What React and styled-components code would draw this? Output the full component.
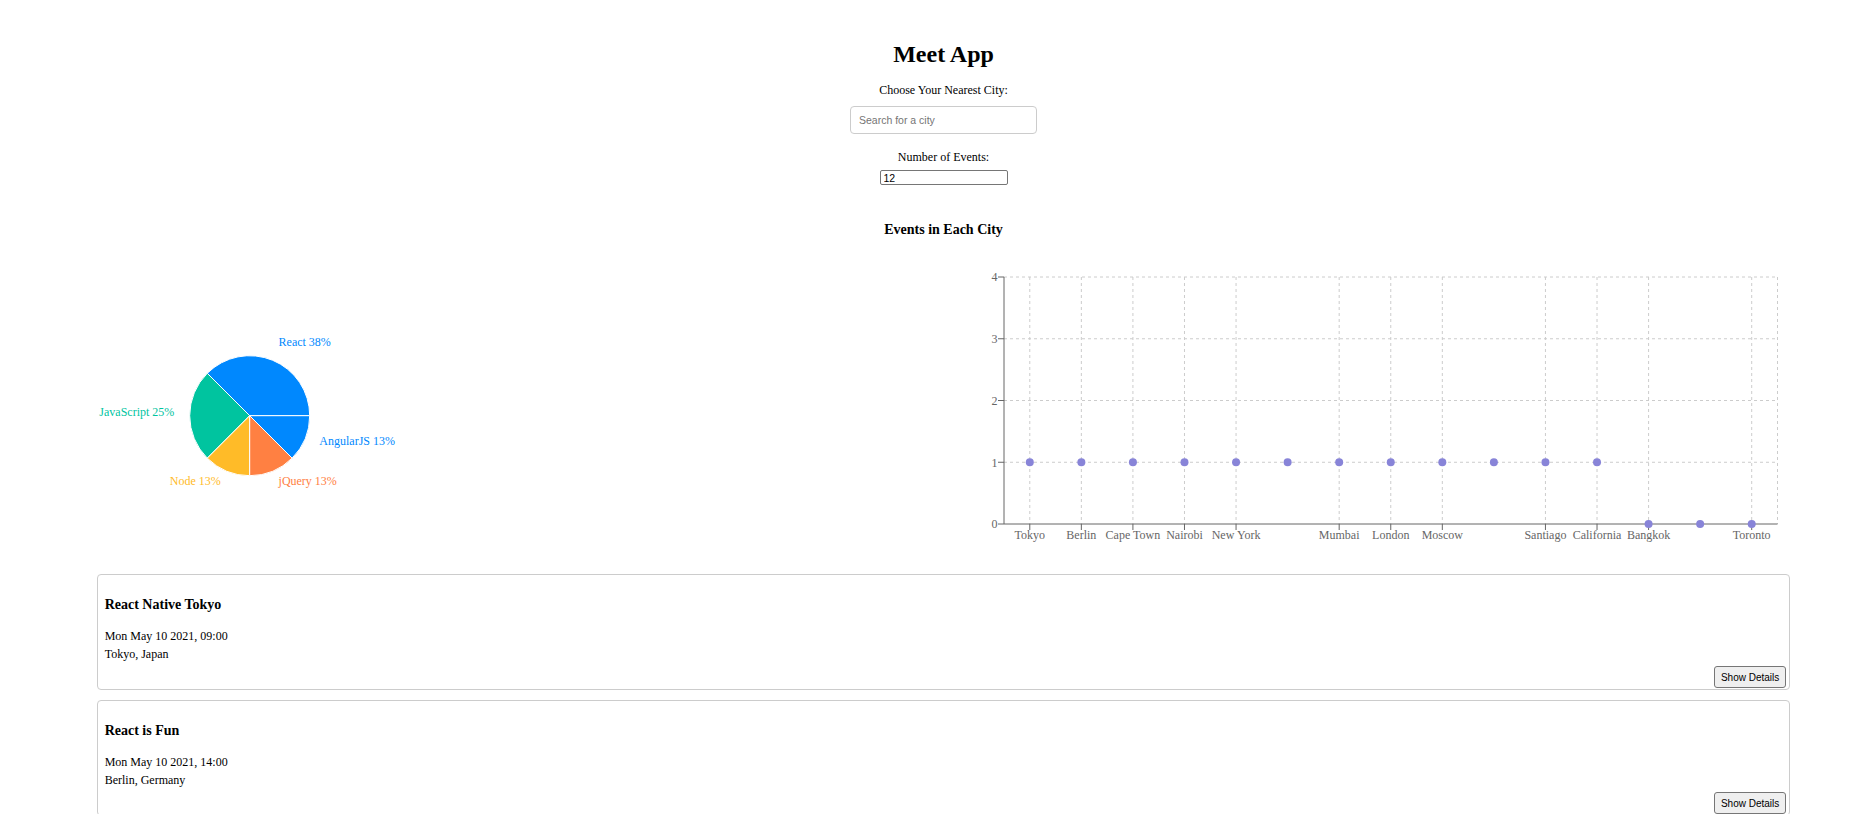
import React from 'react';
import styled, { createGlobalStyle } from 'styled-components';

const GlobalStyle = createGlobalStyle`
  html, body { margin: 0; padding: 0; background: #fff; }
  body {
    font-family: "Liberation Serif", "Times New Roman", serif;
    font-size: 12px;
    color: #000;
  }
  * { box-sizing: border-box; }
`;

const Page = styled.div`
  padding: 41px 0 40px 17px;
`;

const Header = styled.header`
  display: flex;
  flex-direction: column;
  align-items: center;
`;

const Title = styled.h1`
  margin: 0;
  font-size: 24px;
  font-weight: bold;
  line-height: normal;
`;

const Field = styled.div`
  display: flex;
  flex-direction: column;
  align-items: center;
  margin-top: ${(p) => p.$gap}px;
`;

const FieldLabel = styled.label`
  display: block;
  line-height: normal;
`;

const SearchInput = styled.input`
  width: 187px;
  height: 27.6px;
  margin-top: 8px;
  padding: 0 8px;
  border: 1px solid #ccc;
  border-radius: 4px;
  font-family: "Liberation Sans", Arial, sans-serif;
  font-size: 10.5px;
  color: #000;
  outline: none;
  &::placeholder { color: #757575; }
`;

const NumberInput = styled.input`
  width: 128px;
  height: 15px;
  margin-top: 5.5px;
  padding: 0 3px;
  border: 1px solid #767676;
  border-radius: 2px;
  font-family: "Liberation Sans", Arial, sans-serif;
  font-size: 10.5px;
  color: #000;
  outline: none;
  -moz-appearance: textfield;
  &::-webkit-outer-spin-button,
  &::-webkit-inner-spin-button { -webkit-appearance: none; margin: 0; }
`;

const ChartsTitle = styled.h3`
  margin: 37.2px 0 0;
  font-size: 14px;
  font-weight: bold;
  line-height: normal;
  text-align: center;
`;

const ChartsRow = styled.section`
  display: flex;
  margin-top: 18.45px;
  height: 300px;
`;

const ChartPane = styled.div`
  flex: 1 1 0;
  min-width: 0;
`;

const ChartSvg = styled.svg`
  display: block;
  width: 100%;
  height: 300px;
  font-family: "Liberation Serif", "Times New Roman", serif;
  font-size: 12px;
`;

const EventList = styled.ul`
  list-style: none;
  margin: 17.6px 0 0;
  padding: 0;
  display: flex;
  flex-direction: column;
  gap: 10px;
`;

const EventCard = styled.li`
  width: 91.4%;
  margin: 0 auto;
  padding: 7.5px 3px 1px 7px;
  border: 1px solid #ccc;
  border-radius: 4px;
`;

const EventTitle = styled.h3`
  margin: 14px 0;
  font-size: 14px;
  font-weight: bold;
  line-height: normal;
`;

const EventInfo = styled.p`
  margin: 0;
  line-height: 18px;
`;

const CardFooter = styled.div`
  display: flex;
  justify-content: flex-end;
  margin-top: 3.5px;
`;

const DetailsButton = styled.button`
  height: 22px;
  padding: 0 6px;
  background: #efefef;
  border: 1px solid #767676;
  border-radius: 3px;
  font-family: "Liberation Sans", Arial, sans-serif;
  font-size: 10px;
  color: #000;
`;

const PIE = { cx: 232.7, cy: 158.7, r: 60, labelR: 75.4 };
const genres = [
  { name: 'React', value: 3, color: '#0088FE' },
  { name: 'JavaScript', value: 2, color: '#00C49F' },
  { name: 'Node', value: 1, color: '#FFBB28' },
  { name: 'jQuery', value: 1, color: '#FF8042' },
  { name: 'AngularJS', value: 1, color: '#0088FE' },
];

const polar = (r, deg) => {
  const a = (deg * Math.PI) / 180;
  return [PIE.cx + r * Math.cos(a), PIE.cy - r * Math.sin(a)];
};

function GenrePie() {
  const total = genres.reduce((s, g) => s + g.value, 0);
  let start = 0;
  const slices = genres.map((g) => {
    const sweep = (g.value / total) * 360;
    const end = start + sweep;
    const [x0, y0] = polar(PIE.r, start);
    const [x1, y1] = polar(PIE.r, end);
    const mid = start + sweep / 2;
    const [lx, ly] = polar(PIE.labelR, mid);
    const d = `M${PIE.cx},${PIE.cy} L${x0},${y0} A${PIE.r},${PIE.r} 0 ${sweep > 180 ? 1 : 0} 0 ${x1},${y1} Z`;
    start = end;
    return { ...g, d, lx, ly, pct: Math.round((g.value / total) * 100) };
  });
  return (
    <ChartSvg>
      {slices.map((s) => (
        <path key={s.name} d={s.d} fill={s.color} stroke="#fff" strokeWidth="1" />
      ))}
      {slices.map((s) => (
        <text
          key={s.name + 'l'}
          x={s.lx}
          y={s.ly}
          fill={s.color}
          textAnchor={s.lx > PIE.cx ? 'start' : 'end'}
        >
          {`${s.name} ${s.pct}%`}
        </text>
      ))}
    </ChartSvg>
  );
}

const cities = [
  { city: 'Tokyo', count: 1, tick: true },
  { city: 'Berlin', count: 1, tick: true },
  { city: 'Cape Town', count: 1, tick: true },
  { city: 'Nairobi', count: 1, tick: true },
  { city: 'New York', count: 1, tick: true },
  { city: 'Dubai', count: 1, tick: false },
  { city: 'Mumbai', count: 1, tick: true },
  { city: 'London', count: 1, tick: true },
  { city: 'Moscow', count: 1, tick: true },
  { city: 'Paris', count: 1, tick: false },
  { city: 'Santiago', count: 1, tick: true },
  { city: 'California', count: 1, tick: true },
  { city: 'Bangkok', count: 0, tick: true },
  { city: 'Sydney', count: 0, tick: false },
  { city: 'Toronto', count: 0, tick: true },
];

const PLOT = { left: 60, right: 833.5, top: 20, bottom: 267, max: 4 };

function CityScatter() {
  const band = (PLOT.right - PLOT.left) / cities.length;
  const xOf = (i) => PLOT.left + band * (i + 0.5);
  const yOf = (v) => PLOT.bottom - ((PLOT.bottom - PLOT.top) * v) / PLOT.max;
  const yTicks = [0, 1, 2, 3, 4];
  const grid = { stroke: '#ccc', strokeDasharray: '3 3', fill: 'none' };
  return (
    <ChartSvg>
      {yTicks.slice(1).map((v) => (
        <line key={'h' + v} x1={PLOT.left} x2={PLOT.right} y1={yOf(v)} y2={yOf(v)} {...grid} />
      ))}
      {cities.map((c, i) =>
        c.tick ? (
          <line key={'v' + i} x1={xOf(i)} x2={xOf(i)} y1={PLOT.top} y2={PLOT.bottom} {...grid} />
        ) : null
      )}
      <line x1={PLOT.right} x2={PLOT.right} y1={PLOT.top} y2={PLOT.bottom} {...grid} />

      <line x1={PLOT.left} x2={PLOT.left} y1={PLOT.top} y2={PLOT.bottom} stroke="#666" />
      <line x1={PLOT.left} x2={PLOT.right} y1={PLOT.bottom} y2={PLOT.bottom} stroke="#666" />

      {yTicks.map((v) => (
        <g key={'yt' + v}>
          <line x1={PLOT.left - 6} x2={PLOT.left} y1={yOf(v)} y2={yOf(v)} stroke="#666" />
          <text x={PLOT.left - 6.5} y={yOf(v)} dy="0.355em" textAnchor="end" fill="#666">
            {v}
          </text>
        </g>
      ))}
      {cities.map((c, i) =>
        c.tick ? (
          <g key={'xt' + i}>
            <line x1={xOf(i)} x2={xOf(i)} y1={PLOT.bottom} y2={PLOT.bottom + 6} stroke="#666" />
            <text x={xOf(i)} y={PLOT.bottom + 6} dy="0.71em" textAnchor="middle" fill="#666">
              {c.city}
            </text>
          </g>
        ) : null
      )}
      {cities.map((c, i) => (
        <circle key={'d' + i} cx={xOf(i)} cy={yOf(c.count)} r="4" fill="#8884d8" />
      ))}
    </ChartSvg>
  );
}

const events = [
  { id: 1, summary: 'React Native Tokyo', when: 'Mon May 10 2021, 09:00', where: 'Tokyo, Japan' },
  { id: 2, summary: 'React is Fun', when: 'Mon May 10 2021, 14:00', where: 'Berlin, Germany' },
];

export default function App() {
  return (
    <>
      <GlobalStyle />
      <Page>
        <Header>
          <Title>Meet App</Title>
          <Field $gap={15}>
            <FieldLabel htmlFor="city">Choose Your Nearest City:</FieldLabel>
            <SearchInput id="city" type="text" placeholder="Search for a city" />
          </Field>
          <Field $gap={16}>
            <FieldLabel htmlFor="num">Number of Events:</FieldLabel>
            <NumberInput id="num" type="number" defaultValue={12} />
          </Field>
        </Header>
        <ChartsTitle>Events in Each City</ChartsTitle>
        <ChartsRow>
          <ChartPane>
            <GenrePie />
          </ChartPane>
          <ChartPane>
            <CityScatter />
          </ChartPane>
        </ChartsRow>
        <EventList>
          {events.map((e) => (
            <EventCard key={e.id}>
              <EventTitle>{e.summary}</EventTitle>
              <EventInfo>{e.when}</EventInfo>
              <EventInfo>{e.where}</EventInfo>
              <CardFooter>
                <DetailsButton type="button">Show Details</DetailsButton>
              </CardFooter>
            </EventCard>
          ))}
        </EventList>
      </Page>
    </>
  );
}
